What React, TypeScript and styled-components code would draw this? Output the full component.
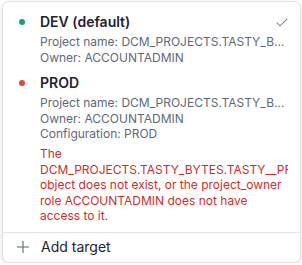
import React from "react";
import styled, { createGlobalStyle } from "styled-components";

const Global = createGlobalStyle`
  html, body { margin: 0; padding: 0; background: #ffffff; }
  body { font-family: Inter, "Noto Sans", sans-serif; -webkit-font-smoothing: antialiased; }
`;

const Panel = styled.div`
  box-sizing: border-box;
  margin: 1px 1px 0 2px;
  width: 299px;
  height: 262px;
  border: 1px solid #dfe2e6;
  border-radius: 7px;
  background: #fff;
  box-shadow: 0 2px 6px rgba(20, 30, 45, 0.12);
  display: flex;
  flex-direction: column;
  overflow: hidden;
`;

const List = styled.div`
  display: flex;
  flex-direction: column;
  gap: 8px;
  padding: 10px 0 8px;
`;

const Item = styled.div`
  display: grid;
  grid-template-columns: 6px 1fr;
  column-gap: 15px;
  padding: 0 12px 0 16px;
`;

const Dot = styled.span<{ $color: string }>`
  width: 6px;
  height: 6px;
  border-radius: 50%;
  background: ${(p) => p.$color};
  margin-top: 7px;
`;

const Body = styled.div`
  min-width: 0;
  display: flex;
  flex-direction: column;
  overflow: hidden;
`;

const TitleRow = styled.div`
  display: flex;
  align-items: center;
  justify-content: space-between;
  margin-bottom: 2px;
`;

const Title = styled.div`
  font-size: 14px;
  font-weight: 600;
  line-height: 20px;
  color: #1d2530;
`;

const Meta = styled.div`
  padding-right: 2px;
  font-size: 12px;
  line-height: 15.6px;
  color: #5e6978;
  white-space: nowrap;
  overflow: hidden;
  text-overflow: ellipsis;
`;

const ErrorText = styled.div`
  margin-top: 4px;
  font-size: 12px;
  line-height: 15.6px;
  color: #c9302c;
`;

const Footer = styled.button`
  display: flex;
  align-items: center;
  gap: 12px;
  height: 34px;
  margin-top: auto;
  padding: 0 0 1px 14px;
  border: none;
  border-top: 1px solid #e2e4e8;
  background: transparent;
  font-family: inherit;
  font-size: 14px;
  color: #1d2530;
  text-align: left;
`;

export default function App() {
  return (
    <>
      <Global />
      <Panel>
        <List>
          <Item>
            <Dot $color="#17a079" />
            <Body>
              <TitleRow>
                <Title>DEV (default)</Title>
                <svg width="12" height="9" viewBox="0 0 12 9">
                  <polyline
                    points="0.7,4.6 4,7.8 11.3,0.8"
                    fill="none"
                    stroke="#7f8a97"
                    strokeWidth="1.1"
                  />
                </svg>
              </TitleRow>
              <Meta>Project name: DCM_PROJECTS.TASTY_BYTES.TASTY__PROJECT</Meta>
              <Meta>Owner: ACCOUNTADMIN</Meta>
            </Body>
          </Item>
          <Item>
            <Dot $color="#e0463b" />
            <Body>
              <TitleRow>
                <Title>PROD</Title>
              </TitleRow>
              <Meta>Project name: DCM_PROJECTS.TASTY_BYTES.TASTY__PROJECT</Meta>
              <Meta>Owner: ACCOUNTADMIN</Meta>
              <Meta>Configuration: PROD</Meta>
              <ErrorText>
                The DCM_PROJECTS.TASTY_BYTES.TASTY__PROJECT object does not exist, or the
                project_owner role ACCOUNTADMIN does not have access to it.
              </ErrorText>
            </Body>
          </Item>
        </List>
        <Footer>
          <svg width="12" height="12" viewBox="0 0 12 12">
            <path d="M6 0v12M0 6h12" stroke="#5b6674" strokeWidth="1.1" fill="none" />
          </svg>
          Add target
        </Footer>
      </Panel>
    </>
  );
}
